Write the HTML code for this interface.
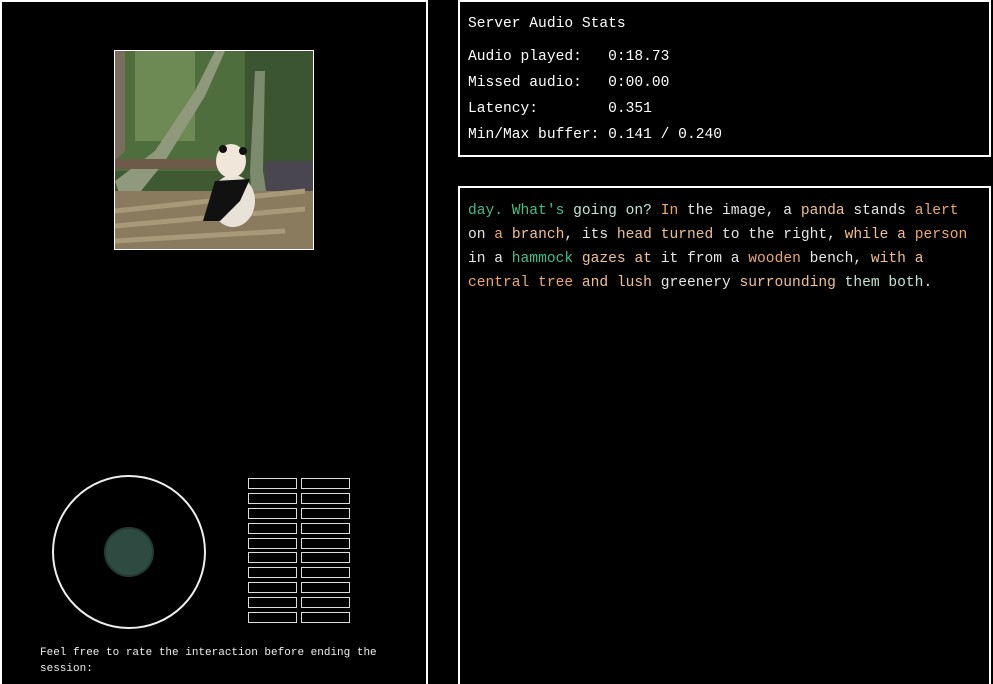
<!DOCTYPE html>
<html><head><meta charset="utf-8"><style>
*{margin:0;padding:0;box-sizing:border-box}
html,body{width:993px;height:684px;overflow:hidden;background:#000}
body{position:relative;font-family:"Liberation Mono",monospace;color:#fff}
#wrap{position:absolute;left:0;top:0;width:993px;height:684px;overflow:hidden}
.box{position:absolute;border:2px solid #fff}
#left{left:0;top:0;width:428px;height:700px}
#stats{left:458px;top:0;width:533px;height:157px;font-size:14.6px;padding:14px 0 0 8px}
#stats div{height:26px;white-space:pre}
#text{left:458px;top:186px;width:533px;height:520px;font-size:14.6px;line-height:24px;padding:11px 0 0 8px;color:#e6e6e6;white-space:pre}
.g{color:#3fbf8b}.o{color:#eda867}.p{color:#f0c090}.m{color:#bfe5d3}
#img{position:absolute;left:114px;top:50px;width:200px;height:200px;border:1px solid #fff}
#circ{position:absolute;left:52px;top:475px;width:154px;height:154px;border:2px solid #eee;border-radius:50%}
#dot{position:absolute;left:104px;top:527px;width:50px;height:50px;border-radius:50%;background:#2e4b41;border:2px solid #243a31}
.bar{position:absolute;width:49px;height:11px;border:1px solid #ddd}
#foot{position:absolute;left:40px;top:645px;font-size:11px;line-height:16px;white-space:pre;color:#eee}
</style></head><body><div id="wrap">
<div class="box" id="left"></div>
<div id="img"><svg width="198" height="198" viewBox="0 0 198 198">
<rect width="198" height="198" fill="#3f5a33"/>
<rect x="0" y="0" width="198" height="120" fill="#4e6f3d"/>
<rect x="20" y="0" width="60" height="90" fill="#6d8a55"/>
<rect x="130" y="0" width="68" height="120" fill="#3a5530"/>
<rect x="150" y="110" width="48" height="88" fill="#4a4650"/>
<path d="M0 130 L40 100 L80 40 L100 0 L110 0 L90 45 L50 110 L10 160 Z" fill="#8f9a7c"/>
<path d="M0 0 L10 0 L10 100 L0 110Z" fill="#7b6d5e"/>
<path d="M140 20 L150 20 L148 120 L160 200 L140 200 L135 120Z" fill="#7d8a6e"/>
<rect x="0" y="140" width="198" height="58" fill="#8a7a5e"/>
<g stroke="#a89a78" stroke-width="5"><line x1="0" y1="160" x2="190" y2="140"/><line x1="0" y1="175" x2="190" y2="158"/><line x1="0" y1="190" x2="170" y2="180"/></g>
<rect x="0" y="108" width="110" height="10" fill="#6e5a48"/>
<ellipse cx="118" cy="150" rx="22" ry="26" fill="#e9e2d8"/>
<path d="M88 170 L100 130 L135 128 L125 150 L105 170Z" fill="#111"/>
<ellipse cx="116" cy="110" rx="15" ry="17" fill="#f0e6da"/>
<circle cx="108" cy="98" r="4" fill="#111"/><circle cx="128" cy="100" r="4" fill="#111"/>
</svg></div>
<div id="circ"></div><div id="dot"></div>
<div id="foot">Feel free to rate the interaction before ending the
session:</div>
<div class="box" id="stats"><div>Server Audio Stats</div><div style="height:7px"></div><div>Audio played:   0:18.73</div><div>Missed audio:   0:00.00</div><div>Latency:        0.351</div><div>Min/Max buffer: 0.141 / 0.240</div></div>
<div class="box" id="text"><span class="g">day. What's</span> <span class="m">going on?</span> <span class="o">In</span> the image, a <span class="p">panda</span> stands <span class="o">alert</span>
on <span class="o">a</span> <span class="p">branch</span>, its <span class="p">head</span> <span class="p">turned</span> to the right, <span class="p">while a</span> <span class="o">person</span>
in a <span class="g">hammock</span> <span class="p">gazes</span> <span class="p">at</span> it from a <span class="o">wooden</span> bench, <span class="p">with a</span>
<span class="o">central tree</span> <span class="p">and</span> <span class="p">lush</span> greenery <span class="p">surrounding</span> <span class="m">them both.</span></div>
<div class="bar" style="left:248px;top:478px"></div><div class="bar" style="left:301px;top:478px"></div>
<div class="bar" style="left:248px;top:493px"></div><div class="bar" style="left:301px;top:493px"></div>
<div class="bar" style="left:248px;top:508px"></div><div class="bar" style="left:301px;top:508px"></div>
<div class="bar" style="left:248px;top:523px"></div><div class="bar" style="left:301px;top:523px"></div>
<div class="bar" style="left:248px;top:538px"></div><div class="bar" style="left:301px;top:538px"></div>
<div class="bar" style="left:248px;top:552px"></div><div class="bar" style="left:301px;top:552px"></div>
<div class="bar" style="left:248px;top:567px"></div><div class="bar" style="left:301px;top:567px"></div>
<div class="bar" style="left:248px;top:582px"></div><div class="bar" style="left:301px;top:582px"></div>
<div class="bar" style="left:248px;top:597px"></div><div class="bar" style="left:301px;top:597px"></div>
<div class="bar" style="left:248px;top:612px"></div><div class="bar" style="left:301px;top:612px"></div>
</div></body></html>
